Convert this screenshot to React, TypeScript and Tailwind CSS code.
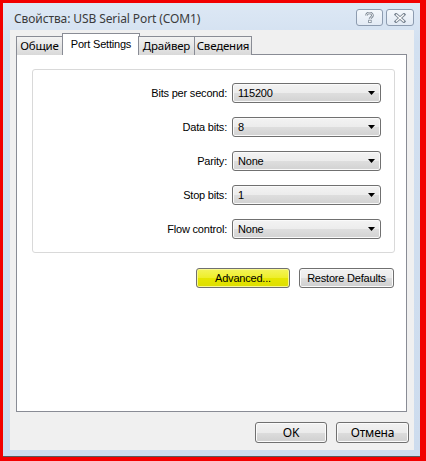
import React from 'react';

const fields = [
    { label: 'Bits per second:', value: '115200' },
    { label: 'Data bits:', value: '8' },
    { label: 'Parity:', value: 'None' },
    { label: 'Stop bits:', value: '1' },
    { label: 'Flow control:', value: 'None' },
];

const tabs = ['Общие', 'Port Settings', 'Драйвер', 'Сведения'];

const ms = { fontFamily: '"Liberation Sans", Arial, sans-serif' };
const ui = { fontFamily: '"Noto Sans", "Open Sans", sans-serif' };

const Combo: React.FC<{ value: string }> = ({ value }) => (
    <div className="w-[149px] h-[20px] flex items-center pl-[5px] pr-[5px] border border-[#707070] rounded-[3px] bg-[linear-gradient(#f3f3f3,#ececec_50%,#dedede_50%,#d2d2d2)] shadow-[inset_0_0_0_1px_#fafafa]">
        <span className="text-[11px] text-black tracking-[-0.2px]" style={ms}>{value}</span>
        <svg className="ml-auto" width="7" height="4" viewBox="0 0 7 4">
            <path d="M0 0h7L3.5 4z" fill="#000" />
        </svg>
    </div>
);

const WinButton: React.FC<{ label: string; w: string; yellow?: boolean; font?: React.CSSProperties; size?: string }> = ({ label, w, yellow, font, size }) => (
    <div
        className={
            yellow
                ? `${w} h-[20px] flex items-center justify-center border border-[#707070] rounded-[3px] bg-[linear-gradient(#f4f45a,#eeee2a_50%,#e6e600_50%,#dede00)] shadow-[inset_0_0_0_1px_#f8f890]`
                : `${w} h-[20px] flex items-center justify-center border border-[#707070] rounded-[3px] bg-[linear-gradient(#f2f2f2,#ebebeb_50%,#dddddd_50%,#cfcfcf)] shadow-[inset_0_0_0_1px_#fbfbfb]`
        }
    >
        <span className={`${size ?? 'text-[11px]'} text-black tracking-[-0.2px]`} style={font ?? ms}>{label}</span>
    </div>
);

export default function App() {
    return (
        <div className="w-[426px] h-[461px] bg-[#f20000] pt-[3px] pl-[3px] pr-[6px] pb-[4px]">
            <div className="h-full flex flex-col bg-[linear-gradient(#dde8f5,#d2e0f0_40px,#cddcee)] border-b border-[#5a5a5a]">
                {/* title bar */}
                <div className="h-[27px] flex items-start pl-[11px] pr-[6px]">
                    <span className="mt-[7px] text-[12px] text-[#3b3b3b] tracking-[-0.1px]" style={ui}>
                        Свойства: USB Serial Port (COM1)
                    </span>
                    <div className="ml-auto mt-[6px] flex gap-[3px]">
                        <div className="w-[27px] h-[17px] flex items-center justify-center border border-[#8d9cb0] rounded-[3px] bg-[linear-gradient(#f4f8fc,#e2eaf4)]">
                            <svg width="9" height="11" viewBox="0 0 9 11">
                                <path d="M1.5 3.5C1.5 1.8 3 1 4.5 1S7.5 2 7.5 3.4c0 1.6-2.5 2-2.5 3.6" fill="none" stroke="#7b8794" strokeWidth="2.6" />
                                <path d="M1.5 3.5C1.5 1.8 3 1 4.5 1S7.5 2 7.5 3.4c0 1.6-2.5 2-2.5 3.6" fill="none" stroke="#fff" strokeWidth="1" />
                                <rect x="3.6" y="8.2" width="2.6" height="2.4" fill="#fff" stroke="#7b8794" strokeWidth="0.8" />
                            </svg>
                        </div>
                        <div className="w-[28px] h-[17px] flex items-center justify-center border border-[#8d9cb0] rounded-[3px] bg-[linear-gradient(#f4f8fc,#e2eaf4)]">
                            <svg width="12" height="10" viewBox="0 0 12 10">
                                <path d="M2 1.5l8 7M10 1.5l-8 7" stroke="#7b8794" strokeWidth="3" strokeLinecap="square" />
                                <path d="M2 1.5l8 7M10 1.5l-8 7" stroke="#fff" strokeWidth="1.2" />
                            </svg>
                        </div>
                    </div>
                </div>

                {/* content */}
                <div className="ml-[7px] mr-[6px] h-[420px] bg-[#f0f0f0] flex flex-col">
                    <div className="pt-[3px] pl-[6px] flex items-end h-[25px] relative z-10 -mb-px">
                        {tabs.map((t) =>
                            t === 'Port Settings' ? (
                                <div key={t} className="w-[78px] -mx-px h-[22px] bg-white border border-b-0 border-[#898c95] flex justify-center pt-[2px]">
                                    <span className="text-[11px] text-black tracking-[-0.2px]" style={ms}>{t}</span>
                                </div>
                            ) : (
                                <div key={t} className={`${t === 'Общие' ? 'w-[47px]' : t === 'Драйвер' ? 'w-[57px]' : 'w-[58px]'} h-[19px] -ml-px first:ml-0 border border-b-0 border-[#898c95] bg-[linear-gradient(#f3f3f3,#e6e6e6_50%,#d9d9d9)] flex justify-center items-center`}>
                                    <span className="text-[11.5px] text-black tracking-[-0.2px]" style={ui}>{t}</span>
                                </div>
                            )
                        )}
                    </div>
                    <div className="ml-[6px] w-[391px] h-[358px] bg-white border border-[#898c95] pt-[14px] pl-[15px]">
                        <div className="w-[363px] h-[184px] border border-[#d9d9d9] rounded-[3px] pt-[13px] flex flex-col gap-[14px]">
                            {fields.map((f) => (
                                <div key={f.label} className="flex items-center gap-[5px]">
                                    <span className="w-[194px] text-right text-[11px] text-black tracking-[-0.2px]" style={ms}>{f.label}</span>
                                    <Combo value={f.value} />
                                </div>
                            ))}
                        </div>
                        <div className="w-[363px] mt-[15px] pr-[1px] flex justify-end gap-[9px]">
                            <WinButton label="Advanced..." w="w-[94px]" yellow />
                            <WinButton label="Restore Defaults" w="w-[95px]" />
                        </div>
                    </div>
                    <div className="mt-[10px] pr-[5px] flex justify-end gap-[9px]">
                        <WinButton label="OK" w="w-[72px] h-[21px]" font={ui} size="text-[12px]" />
                        <WinButton label="Отмена" w="w-[73px] h-[21px]" font={ui} size="text-[12px]" />
                    </div>
                </div>
            </div>
        </div>
    );
}
